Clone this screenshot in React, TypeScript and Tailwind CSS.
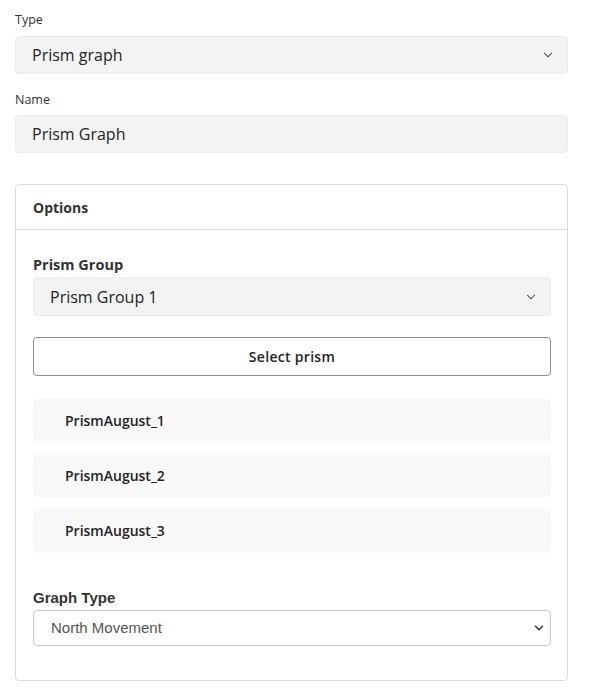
import { ChevronDown } from "lucide-react";

const prisms = ["PrismAugust_1", "PrismAugust_2", "PrismAugust_3"];

const FakeSelect = ({ value, tall }: { value: string; tall?: boolean }) => {
  return (
    <div
      className={
        (tall ? "h-[39px] " : "h-[38px] ") +
        "flex items-center justify-between rounded-[4px] border border-[#ececec] bg-[#f3f3f3] pl-4 pr-[12px]"
      }
    >
      <span className="text-[16px] text-[#242424]">{value}</span>
      <ChevronDown size={14} strokeWidth={1.8} className="text-[#333]" />
    </div>
  );
};

const App = () => {
  return (
    <div className="min-h-[698px] bg-white pl-[15px] pr-[26px] pt-[11px] font-['Open_Sans',sans-serif] text-[#242424]">
      <div className="text-[12.5px] leading-[18px] text-[#333]">Type</div>
      <div className="mt-[7px]">
        <FakeSelect value="Prism graph" />
      </div>

      <div className="mt-[17px] text-[12.5px] leading-[18px] text-[#333]">Name</div>
      <div className="mt-[6px] flex h-[38px] items-center rounded-[4px] border border-[#ececec] bg-[#f3f3f3] px-4">
        <span className="text-[16px] text-[#242424]">Prism Graph</span>
      </div>

      <div className="mt-[31px] rounded-[4px] border border-[#dcdcdc]">
        <div className="flex h-[45px] items-center border-b border-[#dcdcdc] px-[17px]">
          <span className="text-[14px] font-bold text-[#333]">Options</span>
        </div>

        <div className="pb-[34px] pl-[17px] pr-[16px] pt-[25px]">
          <div className="text-[14.5px] font-bold leading-[20px] text-[#333]">Prism Group</div>
          <div className="mt-[2px]">
            <FakeSelect value="Prism Group 1" tall />
          </div>

          <button className="mt-[21px] h-[39px] w-full rounded-[4px] border border-[#8f8f8f] bg-white text-[14px] font-semibold tracking-[0.3px] text-[#242424]">
            Select prism
          </button>

          <div className="mt-[22px] flex flex-col gap-[10px]">
            {prisms.map((p, index) => (
              <div
                key={"prism-" + index}
                className="flex h-[45px] items-center rounded-[6px] bg-[#f9f9f9] pl-8 text-[14px] font-semibold text-[#242424]"
              >
                {p}
              </div>
            ))}
          </div>

          <div className="mt-[35px] font-['Liberation_Sans',Arial,sans-serif] text-[15px] font-bold leading-[20px] text-[#333]">
            Graph Type
          </div>
          <div className="relative mt-[2px]">
            <select
              className="h-[36px] w-full appearance-none rounded-[4px] border border-[#c8c8c8] bg-white pl-[17px] font-['Liberation_Sans',Arial,sans-serif] text-[15px] text-[#555]"
              defaultValue="north"
            >
              <option value="north">North Movement</option>
            </select>
            <ChevronDown
              size={14}
              strokeWidth={3}
              className="pointer-events-none absolute right-[5px] top-[11px] text-[#444]"
            />
          </div>
        </div>
      </div>
    </div>
  );
};

export default App;
